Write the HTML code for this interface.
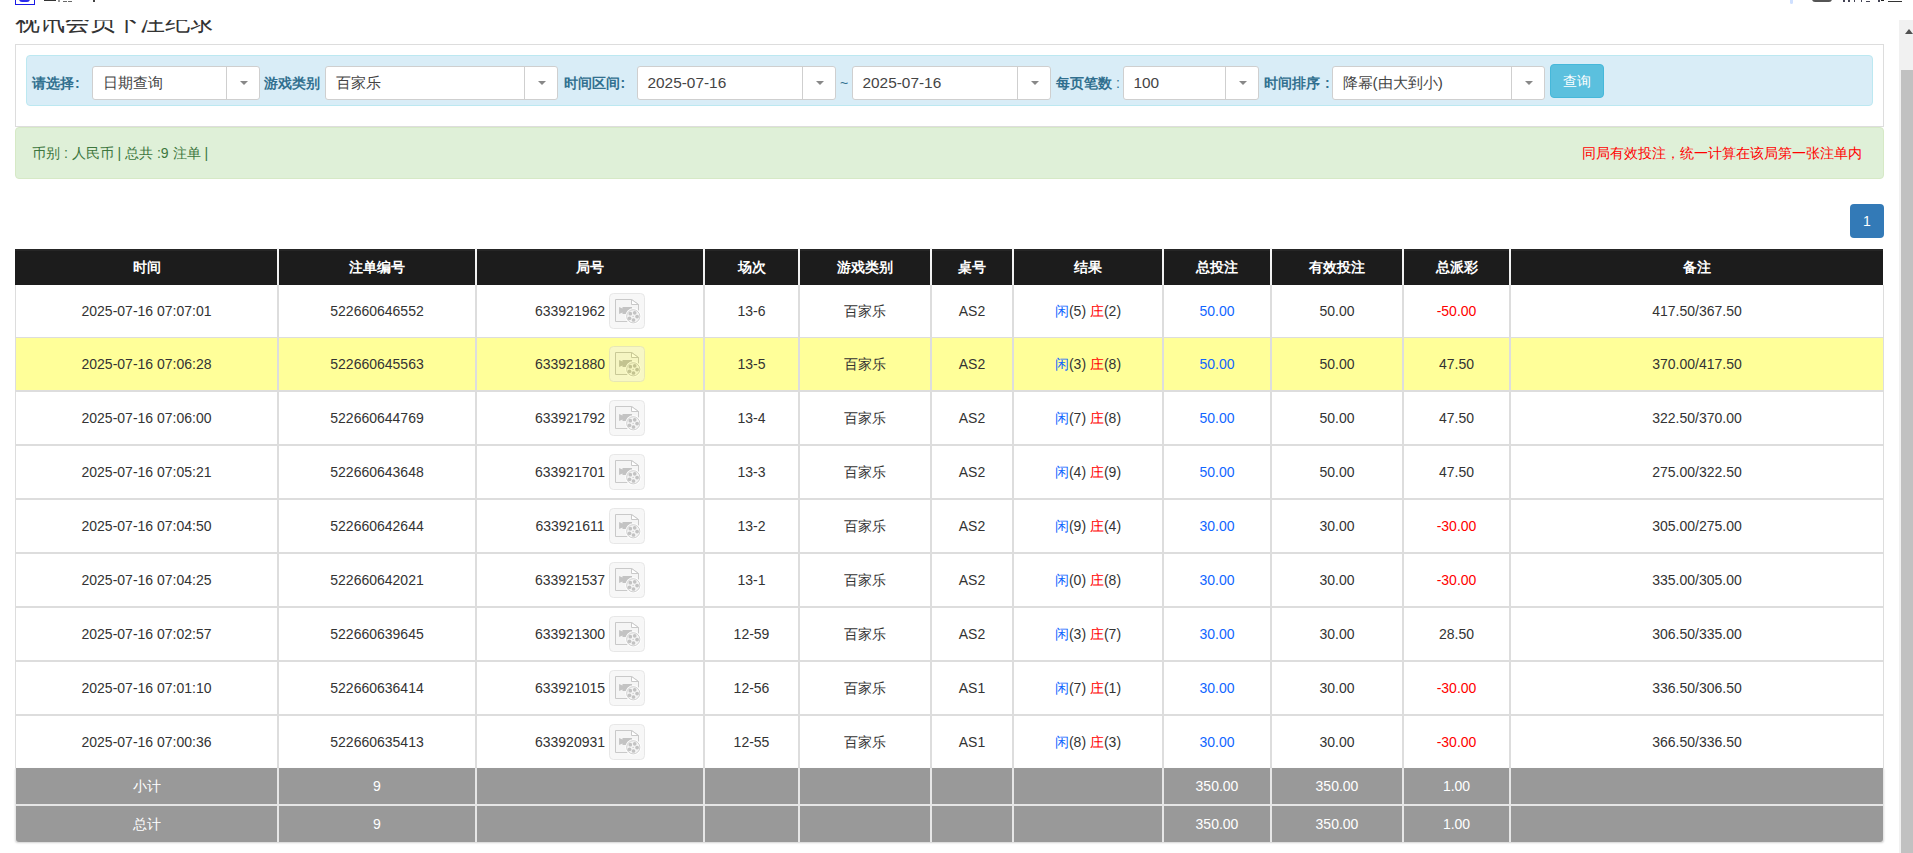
<!DOCTYPE html>
<html><head><meta charset="utf-8"><title>视讯会员下注纪录</title>
<style>
html,body{margin:0;padding:0;}
body{width:1913px;height:853px;overflow:hidden;position:relative;background:#fff;font-family:"Liberation Sans",sans-serif;color:#333;}
.c{position:absolute;text-align:center;font-size:14px;white-space:nowrap;color:#333;}
.th{color:#fff;font-weight:bold;}
.ft{color:#fff;}
.vb{position:absolute;width:2px;}
.blue{color:#1166ff;}
.red{color:#ff0000;}
.ic{display:inline-block;width:36px;height:36px;vertical-align:middle;margin-left:4px;position:relative;top:-1px}
.ic svg{display:block}
.topbar{position:absolute;left:0;top:0;width:1913px;height:20px;background:#fff;z-index:5;overflow:hidden}
.title{position:absolute;left:15px;top:6px;font-size:25px;line-height:30px;color:#333;white-space:nowrap}
.panel{position:absolute;left:15px;top:44px;width:1869px;height:83px;box-sizing:border-box;border:1px solid #dddddd;background:#fff}
.info{position:absolute;left:26px;top:55px;width:1847px;height:51px;box-sizing:border-box;border:1px solid #bce8f1;background:#d9edf7;border-radius:4px}
.lbl{position:absolute;top:66px;height:34px;line-height:34px;font-size:14px;font-weight:bold;color:#31708f;white-space:nowrap}
.sel{position:absolute;top:66px;height:34px;box-sizing:border-box;border:1px solid #cfcfcf;border-radius:3px;background:#fff}
.st{position:absolute;left:9.5px;top:0;line-height:31px;font-size:15.4px;color:#444;white-space:nowrap}
.sd{position:absolute;top:0;height:32px;border-left:1px solid #cfcfcf;box-sizing:border-box}
.arr{position:absolute;left:50%;top:14px;margin-left:-4px;width:0;height:0;border-left:4px solid transparent;border-right:4px solid transparent;border-top:4px solid #888}
.btn{position:absolute;left:1550px;top:64px;width:54px;height:34px;box-sizing:border-box;border:1px solid #46b8da;background:#5bc0de;border-radius:4px;color:#fff;font-size:14px;line-height:32px;text-align:center}
.success{position:absolute;left:15px;top:127px;width:1869px;height:52px;box-sizing:border-box;border:1px solid #d6e9c6;background:#dff0d8;border-radius:4px;font-size:14px}
.success .l{position:absolute;left:16px;top:0;line-height:50px;color:#3c763d;white-space:nowrap}
.success .r{position:absolute;right:21px;top:0;line-height:50px;color:#ff0000;font-size:14px;white-space:nowrap}
.page{position:absolute;left:1850px;top:204px;width:34px;height:34px;background:#337ab7;border-radius:4px;color:#fff;font-size:14px;line-height:34px;text-align:center}
.track{position:absolute;left:1899px;top:20px;width:14px;height:833px;background:#f1f1f1}
.thumb{position:absolute;left:1901px;top:70px;width:12px;height:783px;background:#c1c1c1}
.uparr{position:absolute;left:1905px;top:29px;width:0;height:0;border-left:4.5px solid transparent;border-right:4.5px solid transparent;border-bottom:5px solid #505050}
</style></head><body>
<div class="topbar">
 <div style="position:absolute;left:15px;top:-12px;width:18px;height:15px;border:1px solid #1a1ae6;background:#fff"><div style="position:absolute;left:3px;top:10px;width:11px;height:3px;background:#2a2aee;border-radius:0 0 5px 5px"></div></div>
 <div style="position:absolute;left:44px;top:0px;width:12px;height:1px;background:#333"></div>
 <div style="position:absolute;left:58px;top:0px;width:2px;height:2px;background:#555;opacity:.6"></div>
 <div style="position:absolute;left:63px;top:1px;width:4px;height:1px;background:#444;opacity:.8"></div>
 <div style="position:absolute;left:68px;top:1px;width:4px;height:1px;background:#444;opacity:.8"></div>
 <div style="position:absolute;left:93px;top:0px;width:2px;height:2px;background:#444"></div>
 <div style="position:absolute;left:1790px;top:-2px;width:3px;height:6px;background:#cfe0ff;border-radius:2px"></div>
 <div style="position:absolute;left:1812px;top:-6px;width:20px;height:8px;background:#555;border-radius:3px"></div>
 <div style="position:absolute;left:1843px;top:0px;width:2px;height:2px;background:#445"></div>
 <div style="position:absolute;left:1848px;top:0px;width:2px;height:2px;background:#445"></div>
 <div style="position:absolute;left:1854px;top:0px;width:1px;height:2px;background:#445"></div>
 <div style="position:absolute;left:1861px;top:0px;width:1px;height:2px;background:#445"></div>
 <div style="position:absolute;left:1866px;top:1px;width:4px;height:1px;background:#445"></div>
 <div style="position:absolute;left:1878px;top:0px;width:2px;height:2px;background:#445"></div>
 <div style="position:absolute;left:1881px;top:0px;width:3px;height:1px;background:#222"></div>
 <div style="position:absolute;left:1888px;top:1px;width:14px;height:1px;background:#333"></div>
</div>
<div class="title">视讯会员下注纪录</div>
<div class="panel"></div>
<div class="info"></div>
<div class="lbl" style="left:32px">请选择<span style="margin-left:1px">:</span></div>
<div class="sel" style="left:92px;width:168px"><span class="st">日期查询</span><div class="sd" style="left:133px;width:34px"><i class="arr"></i></div></div>
<div class="lbl" style="left:264px">游戏类别</div>
<div class="sel" style="left:325px;width:233px"><span class="st">百家乐</span><div class="sd" style="left:198px;width:34px"><i class="arr"></i></div></div>
<div class="lbl" style="left:563.5px">时间区间<span style="margin-left:1px">:</span></div>
<div class="sel" style="left:637px;width:199px"><span class="st">2025-07-16</span><div class="sd" style="left:164px;width:34px"><i class="arr"></i></div></div>
<div class="lbl" style="left:840px;font-weight:normal">~</div>
<div class="sel" style="left:852px;width:199px"><span class="st">2025-07-16</span><div class="sd" style="left:164px;width:34px"><i class="arr"></i></div></div>
<div class="lbl" style="left:1056px">每页笔数 <span style="font-weight:normal">:</span></div>
<div class="sel" style="left:1123px;width:136px"><span class="st">100</span><div class="sd" style="left:101px;width:34px"><i class="arr"></i></div></div>
<div class="lbl" style="left:1264px">时间排序 <span style="margin-left:1px">:</span></div>
<div class="sel" style="left:1332px;width:213px"><span class="st">降幂(由大到小)</span><div class="sd" style="left:178px;width:34px"><i class="arr"></i></div></div>
<div class="btn">查询</div>
<div class="success"><span class="l">币别 : 人民币 | 总共 :9 注单 |</span><span class="r">同局有效投注，统一计算在该局第一张注单内</span></div>
<div class="page">1</div>
<div style="position:absolute;left:15px;top:249px;width:1868px;height:36px;background:#1c1c1c"></div>
<div style="position:absolute;left:15px;top:249px;width:1868px;height:2px;background:#262626"></div>
<div class="c th" style="left:16px;top:249px;width:261px;height:36px;line-height:36px">时间</div>
<div class="c th" style="left:279px;top:249px;width:196px;height:36px;line-height:36px">注单编号</div>
<div class="c th" style="left:477px;top:249px;width:226px;height:36px;line-height:36px">局号</div>
<div class="c th" style="left:705px;top:249px;width:93px;height:36px;line-height:36px">场次</div>
<div class="c th" style="left:800px;top:249px;width:130px;height:36px;line-height:36px">游戏类别</div>
<div class="c th" style="left:932px;top:249px;width:80px;height:36px;line-height:36px">桌号</div>
<div class="c th" style="left:1014px;top:249px;width:148px;height:36px;line-height:36px">结果</div>
<div class="c th" style="left:1164px;top:249px;width:106px;height:36px;line-height:36px">总投注</div>
<div class="c th" style="left:1272px;top:249px;width:130px;height:36px;line-height:36px">有效投注</div>
<div class="c th" style="left:1404px;top:249px;width:105px;height:36px;line-height:36px">总派彩</div>
<div class="c th" style="left:1511px;top:249px;width:372px;height:36px;line-height:36px">备注</div>
<div class="vb" style="left:277px;top:248px;height:37px;background:linear-gradient(#f7f7f7,#ececec)"></div>
<div class="vb" style="left:475px;top:248px;height:37px;background:linear-gradient(#f7f7f7,#ececec)"></div>
<div class="vb" style="left:703px;top:248px;height:37px;background:linear-gradient(#f7f7f7,#ececec)"></div>
<div class="vb" style="left:798px;top:248px;height:37px;background:linear-gradient(#f7f7f7,#ececec)"></div>
<div class="vb" style="left:930px;top:248px;height:37px;background:linear-gradient(#f7f7f7,#ececec)"></div>
<div class="vb" style="left:1012px;top:248px;height:37px;background:linear-gradient(#f7f7f7,#ececec)"></div>
<div class="vb" style="left:1162px;top:248px;height:37px;background:linear-gradient(#f7f7f7,#ececec)"></div>
<div class="vb" style="left:1270px;top:248px;height:37px;background:linear-gradient(#f7f7f7,#ececec)"></div>
<div class="vb" style="left:1402px;top:248px;height:37px;background:linear-gradient(#f7f7f7,#ececec)"></div>
<div class="vb" style="left:1509px;top:248px;height:37px;background:linear-gradient(#f7f7f7,#ececec)"></div>
<div style="position:absolute;left:15px;top:285px;width:1868px;height:52px;background:#fff"></div>
<div style="position:absolute;left:15px;top:338px;width:1868px;height:52px;background:#ffff99"></div>
<div style="position:absolute;left:15px;top:392px;width:1868px;height:52px;background:#fff"></div>
<div style="position:absolute;left:15px;top:446px;width:1868px;height:52px;background:#fff"></div>
<div style="position:absolute;left:15px;top:500px;width:1868px;height:52px;background:#fff"></div>
<div style="position:absolute;left:15px;top:554px;width:1868px;height:52px;background:#fff"></div>
<div style="position:absolute;left:15px;top:608px;width:1868px;height:52px;background:#fff"></div>
<div style="position:absolute;left:15px;top:662px;width:1868px;height:52px;background:#fff"></div>
<div style="position:absolute;left:15px;top:716px;width:1868px;height:52px;background:#fff"></div>
<div style="position:absolute;left:15px;top:337px;width:1868px;height:1px;background:#dddddd"></div>
<div style="position:absolute;left:15px;top:390px;width:1868px;height:2px;background:#dddddd"></div>
<div style="position:absolute;left:15px;top:444px;width:1868px;height:2px;background:#dddddd"></div>
<div style="position:absolute;left:15px;top:498px;width:1868px;height:2px;background:#dddddd"></div>
<div style="position:absolute;left:15px;top:552px;width:1868px;height:2px;background:#dddddd"></div>
<div style="position:absolute;left:15px;top:606px;width:1868px;height:2px;background:#dddddd"></div>
<div style="position:absolute;left:15px;top:660px;width:1868px;height:2px;background:#dddddd"></div>
<div style="position:absolute;left:15px;top:714px;width:1868px;height:2px;background:#dddddd"></div>
<div style="position:absolute;left:15px;top:285px;width:1px;height:483px;background:#dddddd"></div>
<div style="position:absolute;left:1883px;top:285px;width:1px;height:483px;background:#dddddd"></div>
<div class="vb" style="left:277px;top:285px;height:483px;background:#dddddd"></div>
<div class="vb" style="left:475px;top:285px;height:483px;background:#dddddd"></div>
<div class="vb" style="left:703px;top:285px;height:483px;background:#dddddd"></div>
<div class="vb" style="left:798px;top:285px;height:483px;background:#dddddd"></div>
<div class="vb" style="left:930px;top:285px;height:483px;background:#dddddd"></div>
<div class="vb" style="left:1012px;top:285px;height:483px;background:#dddddd"></div>
<div class="vb" style="left:1162px;top:285px;height:483px;background:#dddddd"></div>
<div class="vb" style="left:1270px;top:285px;height:483px;background:#dddddd"></div>
<div class="vb" style="left:1402px;top:285px;height:483px;background:#dddddd"></div>
<div class="vb" style="left:1509px;top:285px;height:483px;background:#dddddd"></div>
<div class="c " style="left:16px;top:285px;width:261px;height:52px;line-height:52px">2025-07-16 07:07:01</div>
<div class="c " style="left:279px;top:285px;width:196px;height:52px;line-height:52px">522660646552</div>
<div class="c " style="left:477px;top:285px;width:226px;height:52px;line-height:52px"><span class="jh">633921962</span><span class="ic"><svg width="36" height="36" viewBox="0 0 36 36" style="opacity:.5"><rect x="0.5" y="0.5" width="35" height="35" rx="4" fill="#f1f1f1" stroke="#d1d1d1"/><path d="M6.5 6.5H22.5L29.5 11.5V28.5H6.5Z" fill="#ececec" stroke="#949494"/><path d="M22.5 6.5V11.5H29.5Z" fill="#ffffff" stroke="#949494" stroke-linejoin="round"/><path d="M10.1 14L13.5 15.5V14H23V21H13.5V19.5L10.1 21Z" fill="#898989"/><circle cx="24.25" cy="23.3" r="8" fill="#ffffff"/><circle cx="24.25" cy="23.3" r="6.6" fill="#ececec" stroke="#999999" stroke-width="0.9"/><circle cx="21.3" cy="20.7" r="1.85" fill="#888888"/><circle cx="25.7" cy="19.8" r="1.85" fill="#888888"/><circle cx="28.1" cy="23.6" r="1.85" fill="#888888"/><circle cx="24.5" cy="27" r="1.85" fill="#888888"/><circle cx="20.5" cy="25.3" r="1.85" fill="#888888"/><circle cx="24.1" cy="23.4" r="0.6" fill="#8b8b8b"/></svg></span></div>
<div class="c " style="left:705px;top:285px;width:93px;height:52px;line-height:52px">13-6</div>
<div class="c " style="left:800px;top:285px;width:130px;height:52px;line-height:52px">百家乐</div>
<div class="c " style="left:932px;top:285px;width:80px;height:52px;line-height:52px">AS2</div>
<div class="c " style="left:1014px;top:285px;width:148px;height:52px;line-height:52px"><span class="blue">闲</span>(5) <span class="red">庄</span>(2)</div>
<div class="c " style="left:1164px;top:285px;width:106px;height:52px;line-height:52px"><span class="blue">50.00</span></div>
<div class="c " style="left:1272px;top:285px;width:130px;height:52px;line-height:52px">50.00</div>
<div class="c " style="left:1404px;top:285px;width:105px;height:52px;line-height:52px"><span class="red">-50.00</span></div>
<div class="c " style="left:1511px;top:285px;width:372px;height:52px;line-height:52px">417.50/367.50</div>
<div class="c " style="left:16px;top:338px;width:261px;height:52px;line-height:52px">2025-07-16 07:06:28</div>
<div class="c " style="left:279px;top:338px;width:196px;height:52px;line-height:52px">522660645563</div>
<div class="c " style="left:477px;top:338px;width:226px;height:52px;line-height:52px"><span class="jh">633921880</span><span class="ic"><svg width="36" height="36" viewBox="0 0 36 36" style="opacity:.5"><rect x="0.5" y="0.5" width="35" height="35" rx="4" fill="#f1f1f1" stroke="#d1d1d1"/><path d="M6.5 6.5H22.5L29.5 11.5V28.5H6.5Z" fill="#ececec" stroke="#949494"/><path d="M22.5 6.5V11.5H29.5Z" fill="#ffffff" stroke="#949494" stroke-linejoin="round"/><path d="M10.1 14L13.5 15.5V14H23V21H13.5V19.5L10.1 21Z" fill="#898989"/><circle cx="24.25" cy="23.3" r="8" fill="#ffffff"/><circle cx="24.25" cy="23.3" r="6.6" fill="#ececec" stroke="#999999" stroke-width="0.9"/><circle cx="21.3" cy="20.7" r="1.85" fill="#888888"/><circle cx="25.7" cy="19.8" r="1.85" fill="#888888"/><circle cx="28.1" cy="23.6" r="1.85" fill="#888888"/><circle cx="24.5" cy="27" r="1.85" fill="#888888"/><circle cx="20.5" cy="25.3" r="1.85" fill="#888888"/><circle cx="24.1" cy="23.4" r="0.6" fill="#8b8b8b"/></svg></span></div>
<div class="c " style="left:705px;top:338px;width:93px;height:52px;line-height:52px">13-5</div>
<div class="c " style="left:800px;top:338px;width:130px;height:52px;line-height:52px">百家乐</div>
<div class="c " style="left:932px;top:338px;width:80px;height:52px;line-height:52px">AS2</div>
<div class="c " style="left:1014px;top:338px;width:148px;height:52px;line-height:52px"><span class="blue">闲</span>(3) <span class="red">庄</span>(8)</div>
<div class="c " style="left:1164px;top:338px;width:106px;height:52px;line-height:52px"><span class="blue">50.00</span></div>
<div class="c " style="left:1272px;top:338px;width:130px;height:52px;line-height:52px">50.00</div>
<div class="c " style="left:1404px;top:338px;width:105px;height:52px;line-height:52px">47.50</div>
<div class="c " style="left:1511px;top:338px;width:372px;height:52px;line-height:52px">370.00/417.50</div>
<div class="c " style="left:16px;top:392px;width:261px;height:52px;line-height:52px">2025-07-16 07:06:00</div>
<div class="c " style="left:279px;top:392px;width:196px;height:52px;line-height:52px">522660644769</div>
<div class="c " style="left:477px;top:392px;width:226px;height:52px;line-height:52px"><span class="jh">633921792</span><span class="ic"><svg width="36" height="36" viewBox="0 0 36 36" style="opacity:.5"><rect x="0.5" y="0.5" width="35" height="35" rx="4" fill="#f1f1f1" stroke="#d1d1d1"/><path d="M6.5 6.5H22.5L29.5 11.5V28.5H6.5Z" fill="#ececec" stroke="#949494"/><path d="M22.5 6.5V11.5H29.5Z" fill="#ffffff" stroke="#949494" stroke-linejoin="round"/><path d="M10.1 14L13.5 15.5V14H23V21H13.5V19.5L10.1 21Z" fill="#898989"/><circle cx="24.25" cy="23.3" r="8" fill="#ffffff"/><circle cx="24.25" cy="23.3" r="6.6" fill="#ececec" stroke="#999999" stroke-width="0.9"/><circle cx="21.3" cy="20.7" r="1.85" fill="#888888"/><circle cx="25.7" cy="19.8" r="1.85" fill="#888888"/><circle cx="28.1" cy="23.6" r="1.85" fill="#888888"/><circle cx="24.5" cy="27" r="1.85" fill="#888888"/><circle cx="20.5" cy="25.3" r="1.85" fill="#888888"/><circle cx="24.1" cy="23.4" r="0.6" fill="#8b8b8b"/></svg></span></div>
<div class="c " style="left:705px;top:392px;width:93px;height:52px;line-height:52px">13-4</div>
<div class="c " style="left:800px;top:392px;width:130px;height:52px;line-height:52px">百家乐</div>
<div class="c " style="left:932px;top:392px;width:80px;height:52px;line-height:52px">AS2</div>
<div class="c " style="left:1014px;top:392px;width:148px;height:52px;line-height:52px"><span class="blue">闲</span>(7) <span class="red">庄</span>(8)</div>
<div class="c " style="left:1164px;top:392px;width:106px;height:52px;line-height:52px"><span class="blue">50.00</span></div>
<div class="c " style="left:1272px;top:392px;width:130px;height:52px;line-height:52px">50.00</div>
<div class="c " style="left:1404px;top:392px;width:105px;height:52px;line-height:52px">47.50</div>
<div class="c " style="left:1511px;top:392px;width:372px;height:52px;line-height:52px">322.50/370.00</div>
<div class="c " style="left:16px;top:446px;width:261px;height:52px;line-height:52px">2025-07-16 07:05:21</div>
<div class="c " style="left:279px;top:446px;width:196px;height:52px;line-height:52px">522660643648</div>
<div class="c " style="left:477px;top:446px;width:226px;height:52px;line-height:52px"><span class="jh">633921701</span><span class="ic"><svg width="36" height="36" viewBox="0 0 36 36" style="opacity:.5"><rect x="0.5" y="0.5" width="35" height="35" rx="4" fill="#f1f1f1" stroke="#d1d1d1"/><path d="M6.5 6.5H22.5L29.5 11.5V28.5H6.5Z" fill="#ececec" stroke="#949494"/><path d="M22.5 6.5V11.5H29.5Z" fill="#ffffff" stroke="#949494" stroke-linejoin="round"/><path d="M10.1 14L13.5 15.5V14H23V21H13.5V19.5L10.1 21Z" fill="#898989"/><circle cx="24.25" cy="23.3" r="8" fill="#ffffff"/><circle cx="24.25" cy="23.3" r="6.6" fill="#ececec" stroke="#999999" stroke-width="0.9"/><circle cx="21.3" cy="20.7" r="1.85" fill="#888888"/><circle cx="25.7" cy="19.8" r="1.85" fill="#888888"/><circle cx="28.1" cy="23.6" r="1.85" fill="#888888"/><circle cx="24.5" cy="27" r="1.85" fill="#888888"/><circle cx="20.5" cy="25.3" r="1.85" fill="#888888"/><circle cx="24.1" cy="23.4" r="0.6" fill="#8b8b8b"/></svg></span></div>
<div class="c " style="left:705px;top:446px;width:93px;height:52px;line-height:52px">13-3</div>
<div class="c " style="left:800px;top:446px;width:130px;height:52px;line-height:52px">百家乐</div>
<div class="c " style="left:932px;top:446px;width:80px;height:52px;line-height:52px">AS2</div>
<div class="c " style="left:1014px;top:446px;width:148px;height:52px;line-height:52px"><span class="blue">闲</span>(4) <span class="red">庄</span>(9)</div>
<div class="c " style="left:1164px;top:446px;width:106px;height:52px;line-height:52px"><span class="blue">50.00</span></div>
<div class="c " style="left:1272px;top:446px;width:130px;height:52px;line-height:52px">50.00</div>
<div class="c " style="left:1404px;top:446px;width:105px;height:52px;line-height:52px">47.50</div>
<div class="c " style="left:1511px;top:446px;width:372px;height:52px;line-height:52px">275.00/322.50</div>
<div class="c " style="left:16px;top:500px;width:261px;height:52px;line-height:52px">2025-07-16 07:04:50</div>
<div class="c " style="left:279px;top:500px;width:196px;height:52px;line-height:52px">522660642644</div>
<div class="c " style="left:477px;top:500px;width:226px;height:52px;line-height:52px"><span class="jh">633921611</span><span class="ic"><svg width="36" height="36" viewBox="0 0 36 36" style="opacity:.5"><rect x="0.5" y="0.5" width="35" height="35" rx="4" fill="#f1f1f1" stroke="#d1d1d1"/><path d="M6.5 6.5H22.5L29.5 11.5V28.5H6.5Z" fill="#ececec" stroke="#949494"/><path d="M22.5 6.5V11.5H29.5Z" fill="#ffffff" stroke="#949494" stroke-linejoin="round"/><path d="M10.1 14L13.5 15.5V14H23V21H13.5V19.5L10.1 21Z" fill="#898989"/><circle cx="24.25" cy="23.3" r="8" fill="#ffffff"/><circle cx="24.25" cy="23.3" r="6.6" fill="#ececec" stroke="#999999" stroke-width="0.9"/><circle cx="21.3" cy="20.7" r="1.85" fill="#888888"/><circle cx="25.7" cy="19.8" r="1.85" fill="#888888"/><circle cx="28.1" cy="23.6" r="1.85" fill="#888888"/><circle cx="24.5" cy="27" r="1.85" fill="#888888"/><circle cx="20.5" cy="25.3" r="1.85" fill="#888888"/><circle cx="24.1" cy="23.4" r="0.6" fill="#8b8b8b"/></svg></span></div>
<div class="c " style="left:705px;top:500px;width:93px;height:52px;line-height:52px">13-2</div>
<div class="c " style="left:800px;top:500px;width:130px;height:52px;line-height:52px">百家乐</div>
<div class="c " style="left:932px;top:500px;width:80px;height:52px;line-height:52px">AS2</div>
<div class="c " style="left:1014px;top:500px;width:148px;height:52px;line-height:52px"><span class="blue">闲</span>(9) <span class="red">庄</span>(4)</div>
<div class="c " style="left:1164px;top:500px;width:106px;height:52px;line-height:52px"><span class="blue">30.00</span></div>
<div class="c " style="left:1272px;top:500px;width:130px;height:52px;line-height:52px">30.00</div>
<div class="c " style="left:1404px;top:500px;width:105px;height:52px;line-height:52px"><span class="red">-30.00</span></div>
<div class="c " style="left:1511px;top:500px;width:372px;height:52px;line-height:52px">305.00/275.00</div>
<div class="c " style="left:16px;top:554px;width:261px;height:52px;line-height:52px">2025-07-16 07:04:25</div>
<div class="c " style="left:279px;top:554px;width:196px;height:52px;line-height:52px">522660642021</div>
<div class="c " style="left:477px;top:554px;width:226px;height:52px;line-height:52px"><span class="jh">633921537</span><span class="ic"><svg width="36" height="36" viewBox="0 0 36 36" style="opacity:.5"><rect x="0.5" y="0.5" width="35" height="35" rx="4" fill="#f1f1f1" stroke="#d1d1d1"/><path d="M6.5 6.5H22.5L29.5 11.5V28.5H6.5Z" fill="#ececec" stroke="#949494"/><path d="M22.5 6.5V11.5H29.5Z" fill="#ffffff" stroke="#949494" stroke-linejoin="round"/><path d="M10.1 14L13.5 15.5V14H23V21H13.5V19.5L10.1 21Z" fill="#898989"/><circle cx="24.25" cy="23.3" r="8" fill="#ffffff"/><circle cx="24.25" cy="23.3" r="6.6" fill="#ececec" stroke="#999999" stroke-width="0.9"/><circle cx="21.3" cy="20.7" r="1.85" fill="#888888"/><circle cx="25.7" cy="19.8" r="1.85" fill="#888888"/><circle cx="28.1" cy="23.6" r="1.85" fill="#888888"/><circle cx="24.5" cy="27" r="1.85" fill="#888888"/><circle cx="20.5" cy="25.3" r="1.85" fill="#888888"/><circle cx="24.1" cy="23.4" r="0.6" fill="#8b8b8b"/></svg></span></div>
<div class="c " style="left:705px;top:554px;width:93px;height:52px;line-height:52px">13-1</div>
<div class="c " style="left:800px;top:554px;width:130px;height:52px;line-height:52px">百家乐</div>
<div class="c " style="left:932px;top:554px;width:80px;height:52px;line-height:52px">AS2</div>
<div class="c " style="left:1014px;top:554px;width:148px;height:52px;line-height:52px"><span class="blue">闲</span>(0) <span class="red">庄</span>(8)</div>
<div class="c " style="left:1164px;top:554px;width:106px;height:52px;line-height:52px"><span class="blue">30.00</span></div>
<div class="c " style="left:1272px;top:554px;width:130px;height:52px;line-height:52px">30.00</div>
<div class="c " style="left:1404px;top:554px;width:105px;height:52px;line-height:52px"><span class="red">-30.00</span></div>
<div class="c " style="left:1511px;top:554px;width:372px;height:52px;line-height:52px">335.00/305.00</div>
<div class="c " style="left:16px;top:608px;width:261px;height:52px;line-height:52px">2025-07-16 07:02:57</div>
<div class="c " style="left:279px;top:608px;width:196px;height:52px;line-height:52px">522660639645</div>
<div class="c " style="left:477px;top:608px;width:226px;height:52px;line-height:52px"><span class="jh">633921300</span><span class="ic"><svg width="36" height="36" viewBox="0 0 36 36" style="opacity:.5"><rect x="0.5" y="0.5" width="35" height="35" rx="4" fill="#f1f1f1" stroke="#d1d1d1"/><path d="M6.5 6.5H22.5L29.5 11.5V28.5H6.5Z" fill="#ececec" stroke="#949494"/><path d="M22.5 6.5V11.5H29.5Z" fill="#ffffff" stroke="#949494" stroke-linejoin="round"/><path d="M10.1 14L13.5 15.5V14H23V21H13.5V19.5L10.1 21Z" fill="#898989"/><circle cx="24.25" cy="23.3" r="8" fill="#ffffff"/><circle cx="24.25" cy="23.3" r="6.6" fill="#ececec" stroke="#999999" stroke-width="0.9"/><circle cx="21.3" cy="20.7" r="1.85" fill="#888888"/><circle cx="25.7" cy="19.8" r="1.85" fill="#888888"/><circle cx="28.1" cy="23.6" r="1.85" fill="#888888"/><circle cx="24.5" cy="27" r="1.85" fill="#888888"/><circle cx="20.5" cy="25.3" r="1.85" fill="#888888"/><circle cx="24.1" cy="23.4" r="0.6" fill="#8b8b8b"/></svg></span></div>
<div class="c " style="left:705px;top:608px;width:93px;height:52px;line-height:52px">12-59</div>
<div class="c " style="left:800px;top:608px;width:130px;height:52px;line-height:52px">百家乐</div>
<div class="c " style="left:932px;top:608px;width:80px;height:52px;line-height:52px">AS2</div>
<div class="c " style="left:1014px;top:608px;width:148px;height:52px;line-height:52px"><span class="blue">闲</span>(3) <span class="red">庄</span>(7)</div>
<div class="c " style="left:1164px;top:608px;width:106px;height:52px;line-height:52px"><span class="blue">30.00</span></div>
<div class="c " style="left:1272px;top:608px;width:130px;height:52px;line-height:52px">30.00</div>
<div class="c " style="left:1404px;top:608px;width:105px;height:52px;line-height:52px">28.50</div>
<div class="c " style="left:1511px;top:608px;width:372px;height:52px;line-height:52px">306.50/335.00</div>
<div class="c " style="left:16px;top:662px;width:261px;height:52px;line-height:52px">2025-07-16 07:01:10</div>
<div class="c " style="left:279px;top:662px;width:196px;height:52px;line-height:52px">522660636414</div>
<div class="c " style="left:477px;top:662px;width:226px;height:52px;line-height:52px"><span class="jh">633921015</span><span class="ic"><svg width="36" height="36" viewBox="0 0 36 36" style="opacity:.5"><rect x="0.5" y="0.5" width="35" height="35" rx="4" fill="#f1f1f1" stroke="#d1d1d1"/><path d="M6.5 6.5H22.5L29.5 11.5V28.5H6.5Z" fill="#ececec" stroke="#949494"/><path d="M22.5 6.5V11.5H29.5Z" fill="#ffffff" stroke="#949494" stroke-linejoin="round"/><path d="M10.1 14L13.5 15.5V14H23V21H13.5V19.5L10.1 21Z" fill="#898989"/><circle cx="24.25" cy="23.3" r="8" fill="#ffffff"/><circle cx="24.25" cy="23.3" r="6.6" fill="#ececec" stroke="#999999" stroke-width="0.9"/><circle cx="21.3" cy="20.7" r="1.85" fill="#888888"/><circle cx="25.7" cy="19.8" r="1.85" fill="#888888"/><circle cx="28.1" cy="23.6" r="1.85" fill="#888888"/><circle cx="24.5" cy="27" r="1.85" fill="#888888"/><circle cx="20.5" cy="25.3" r="1.85" fill="#888888"/><circle cx="24.1" cy="23.4" r="0.6" fill="#8b8b8b"/></svg></span></div>
<div class="c " style="left:705px;top:662px;width:93px;height:52px;line-height:52px">12-56</div>
<div class="c " style="left:800px;top:662px;width:130px;height:52px;line-height:52px">百家乐</div>
<div class="c " style="left:932px;top:662px;width:80px;height:52px;line-height:52px">AS1</div>
<div class="c " style="left:1014px;top:662px;width:148px;height:52px;line-height:52px"><span class="blue">闲</span>(7) <span class="red">庄</span>(1)</div>
<div class="c " style="left:1164px;top:662px;width:106px;height:52px;line-height:52px"><span class="blue">30.00</span></div>
<div class="c " style="left:1272px;top:662px;width:130px;height:52px;line-height:52px">30.00</div>
<div class="c " style="left:1404px;top:662px;width:105px;height:52px;line-height:52px"><span class="red">-30.00</span></div>
<div class="c " style="left:1511px;top:662px;width:372px;height:52px;line-height:52px">336.50/306.50</div>
<div class="c " style="left:16px;top:716px;width:261px;height:52px;line-height:52px">2025-07-16 07:00:36</div>
<div class="c " style="left:279px;top:716px;width:196px;height:52px;line-height:52px">522660635413</div>
<div class="c " style="left:477px;top:716px;width:226px;height:52px;line-height:52px"><span class="jh">633920931</span><span class="ic"><svg width="36" height="36" viewBox="0 0 36 36" style="opacity:.5"><rect x="0.5" y="0.5" width="35" height="35" rx="4" fill="#f1f1f1" stroke="#d1d1d1"/><path d="M6.5 6.5H22.5L29.5 11.5V28.5H6.5Z" fill="#ececec" stroke="#949494"/><path d="M22.5 6.5V11.5H29.5Z" fill="#ffffff" stroke="#949494" stroke-linejoin="round"/><path d="M10.1 14L13.5 15.5V14H23V21H13.5V19.5L10.1 21Z" fill="#898989"/><circle cx="24.25" cy="23.3" r="8" fill="#ffffff"/><circle cx="24.25" cy="23.3" r="6.6" fill="#ececec" stroke="#999999" stroke-width="0.9"/><circle cx="21.3" cy="20.7" r="1.85" fill="#888888"/><circle cx="25.7" cy="19.8" r="1.85" fill="#888888"/><circle cx="28.1" cy="23.6" r="1.85" fill="#888888"/><circle cx="24.5" cy="27" r="1.85" fill="#888888"/><circle cx="20.5" cy="25.3" r="1.85" fill="#888888"/><circle cx="24.1" cy="23.4" r="0.6" fill="#8b8b8b"/></svg></span></div>
<div class="c " style="left:705px;top:716px;width:93px;height:52px;line-height:52px">12-55</div>
<div class="c " style="left:800px;top:716px;width:130px;height:52px;line-height:52px">百家乐</div>
<div class="c " style="left:932px;top:716px;width:80px;height:52px;line-height:52px">AS1</div>
<div class="c " style="left:1014px;top:716px;width:148px;height:52px;line-height:52px"><span class="blue">闲</span>(8) <span class="red">庄</span>(3)</div>
<div class="c " style="left:1164px;top:716px;width:106px;height:52px;line-height:52px"><span class="blue">30.00</span></div>
<div class="c " style="left:1272px;top:716px;width:130px;height:52px;line-height:52px">30.00</div>
<div class="c " style="left:1404px;top:716px;width:105px;height:52px;line-height:52px"><span class="red">-30.00</span></div>
<div class="c " style="left:1511px;top:716px;width:372px;height:52px;line-height:52px">366.50/336.50</div>
<div style="position:absolute;left:15px;top:768px;width:1869px;height:74px;background:#e6e6e6;border-radius:0 0 3px 3px;box-shadow:0 1px 2px rgba(0,0,0,0.18)"></div>
<div style="position:absolute;left:16px;top:768px;width:261px;height:36px;background:#999999;"></div>
<div style="position:absolute;left:279px;top:768px;width:196px;height:36px;background:#999999;"></div>
<div style="position:absolute;left:477px;top:768px;width:226px;height:36px;background:#999999;"></div>
<div style="position:absolute;left:705px;top:768px;width:93px;height:36px;background:#999999;"></div>
<div style="position:absolute;left:800px;top:768px;width:130px;height:36px;background:#999999;"></div>
<div style="position:absolute;left:932px;top:768px;width:80px;height:36px;background:#999999;"></div>
<div style="position:absolute;left:1014px;top:768px;width:148px;height:36px;background:#999999;"></div>
<div style="position:absolute;left:1164px;top:768px;width:106px;height:36px;background:#999999;"></div>
<div style="position:absolute;left:1272px;top:768px;width:130px;height:36px;background:#999999;"></div>
<div style="position:absolute;left:1404px;top:768px;width:105px;height:36px;background:#999999;"></div>
<div style="position:absolute;left:1511px;top:768px;width:372px;height:36px;background:#999999;"></div>
<div class="c ft" style="left:16px;top:768px;width:261px;height:36px;line-height:36px">小计</div>
<div class="c ft" style="left:279px;top:768px;width:196px;height:36px;line-height:36px">9</div>
<div class="c ft" style="left:1164px;top:768px;width:106px;height:36px;line-height:36px">350.00</div>
<div class="c ft" style="left:1272px;top:768px;width:130px;height:36px;line-height:36px">350.00</div>
<div class="c ft" style="left:1404px;top:768px;width:105px;height:36px;line-height:36px">1.00</div>
<div style="position:absolute;left:16px;top:806px;width:261px;height:36px;background:#999999;border-bottom-left-radius:3px;"></div>
<div style="position:absolute;left:279px;top:806px;width:196px;height:36px;background:#999999;"></div>
<div style="position:absolute;left:477px;top:806px;width:226px;height:36px;background:#999999;"></div>
<div style="position:absolute;left:705px;top:806px;width:93px;height:36px;background:#999999;"></div>
<div style="position:absolute;left:800px;top:806px;width:130px;height:36px;background:#999999;"></div>
<div style="position:absolute;left:932px;top:806px;width:80px;height:36px;background:#999999;"></div>
<div style="position:absolute;left:1014px;top:806px;width:148px;height:36px;background:#999999;"></div>
<div style="position:absolute;left:1164px;top:806px;width:106px;height:36px;background:#999999;"></div>
<div style="position:absolute;left:1272px;top:806px;width:130px;height:36px;background:#999999;"></div>
<div style="position:absolute;left:1404px;top:806px;width:105px;height:36px;background:#999999;"></div>
<div style="position:absolute;left:1511px;top:806px;width:372px;height:36px;background:#999999;border-bottom-right-radius:3px;"></div>
<div class="c ft" style="left:16px;top:806px;width:261px;height:36px;line-height:36px">总计</div>
<div class="c ft" style="left:279px;top:806px;width:196px;height:36px;line-height:36px">9</div>
<div class="c ft" style="left:1164px;top:806px;width:106px;height:36px;line-height:36px">350.00</div>
<div class="c ft" style="left:1272px;top:806px;width:130px;height:36px;line-height:36px">350.00</div>
<div class="c ft" style="left:1404px;top:806px;width:105px;height:36px;line-height:36px">1.00</div>
<div class="track"></div><div class="thumb"></div><div class="uparr"></div>
</body></html>
